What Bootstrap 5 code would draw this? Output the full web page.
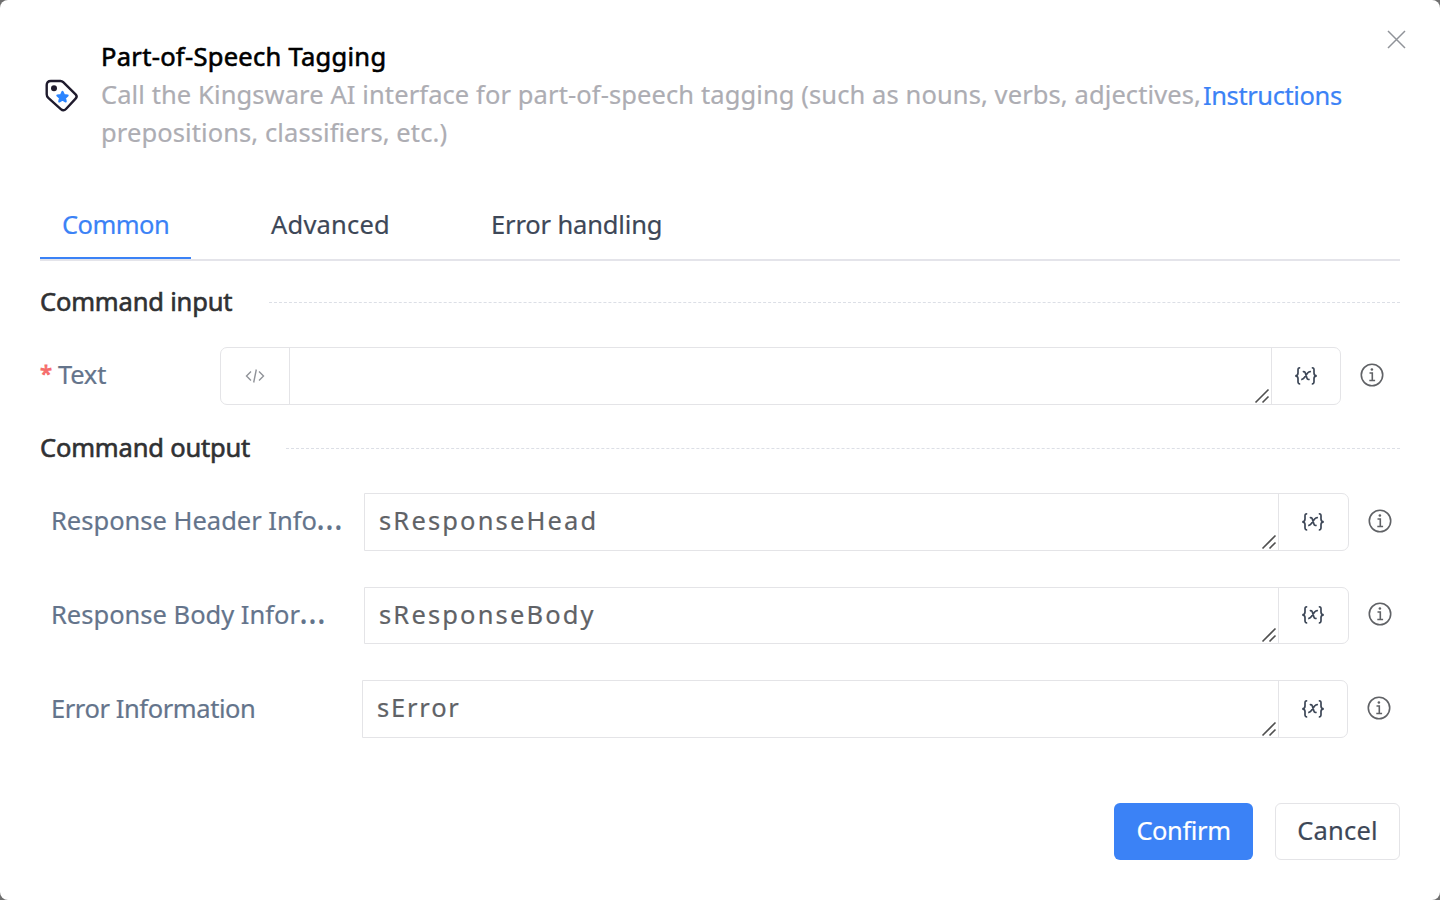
<!DOCTYPE html>
<html lang="en">
<head>
<meta charset="utf-8">
<meta name="viewport" content="width=device-width, initial-scale=1">
<title>Part-of-Speech Tagging</title>
<link href="https://cdn.jsdelivr.net/npm/bootstrap@5.3.0/dist/css/bootstrap.min.css" rel="stylesheet">
<style>
  html, body { height: 100%; }
  body { background: #6f6f6f; font-family: "Noto Sans", sans-serif; font-size: 25.5px; line-height: 38px; overflow: hidden; color: #3d4757; }
  .dialog { height: 900px; border-radius: 8px; background: #fff; padding: 37px 40px 40px; }
  .head { height: 163px; }
  .tag-icon { width: 43px; margin: 36px 18px 0 0; }
  .copy { width: 1102px; white-space: nowrap; }
  .title { color: #000; -webkit-text-stroke: .6px #000; font-size: 25.5px; line-height: 38px; letter-spacing: .29px; }
  .desc { color: #adadb3; -webkit-text-stroke: .2px; letter-spacing: .098px; }
  .doc { color: #3b82f6; text-decoration: none; margin-top: 39px; letter-spacing: -.4px; -webkit-text-stroke: .2px; }
  .shut { top: 29px; right: 33px; }
  .tabs { height: 61px; border-bottom: 2px solid #e4e4ea; -webkit-text-stroke: .2px; }
  .tabs .nav-link { height: 59px; padding: 5px 0 0 22px; color: #3d4757; border-radius: 0; }
  .tabs .nav-link.active { width: 151px; color: #3b82f6; border-bottom: 2px solid #3b82f6; letter-spacing: -.55px; }
  .tabs .t2 { width: 220px; padding-left: 0; margin-left: 80px; letter-spacing: .2px; }
  .tabs .t3 { padding-left: 0; letter-spacing: -.15px; }
  .section { height: 38px; color: #303133; -webkit-text-stroke: .6px #303133; letter-spacing: -.18px; }
  .section > span:first-child { margin-top: -2px; }
  .s-in { margin-top: 22px; }
  .s-in > span:first-child { width: 229px; }
  .s-out { margin-top: 24.8px; }
  .s-out > span:first-child { width: 246px; }
  .dash { flex: 1; border-top: 1px dashed #dcdfe6; }
  .field { height: 57.6px; }
  .first { margin-top: 26px; }
  .label { color: #64748b; white-space: nowrap; width: 313px; margin-top: -3px; -webkit-text-stroke: .2px; }
  .first .label { width: 180px; letter-spacing: -.2px; }
  .req { color: #f56c6c; width: 18px; font-size: 22px; -webkit-text-stroke: .8px #f56c6c; line-height: 34px; }
  .more { font-size: 34px; line-height: 0; -webkit-text-stroke: 0; margin-left: -1px; }
  .box { height: 57.6px; border: 1px solid #e4e4e7; width: 985px; }
  .first .box { width: 1121px; border-radius: 7px; }
  .box.end { border-radius: 0 7px 7px 0; }
  .slot { flex: none; }
  .slot.l { width: 69px; border-right: 1px solid #e4e4e7; }
  .slot.r { border-left: 1px solid #e4e4e7; width: 70px; padding-right: 1px; }
  .first .slot.r, .last .slot.r { width: 69px; padding-right: 0; }
  .last .label { width: 311px; letter-spacing: -.42px; }
  .last .box { width: 986px; }
  .box textarea { resize: none; border: 0; outline: 0; padding: 7px 14px 0; width: 100%; height: 100%; color: #606266; background: transparent; overflow: hidden; display: block; line-height: 38px; letter-spacing: 2.15px; -webkit-text-stroke: .2px; }
  .last textarea { letter-spacing: 1.8px; }
  .grip { right: 1px; bottom: 0; }
  .tip { margin: -2px 0 0 18.5px; flex: none; }
  .outs { gap: 36.07px; margin-top: 25.6px; padding-left: 11px; }
  .foot { margin-top: 65px; gap: 22px; }
  .action { height: 57px; border-radius: 6px; line-height: 38px; padding: 0 0 3px; white-space: nowrap; -webkit-text-stroke: .2px; }
  .ok { width: 139px; background: #3b82f6; color: #fff; border: 0; letter-spacing: -.4px; }
  .no { width: 125px; background: #fff; color: #3d4757; border: 1px solid #e4e4e7; letter-spacing: .2px; }
</style>
</head>
<body>
<svg class="d-none">
  <symbol id="var" viewBox="0 0 24 20"><g fill="none" stroke="#3d4757" stroke-width="1.700"><path d="M6.200 1.800Q4 1.600 4 3.800V7Q4 9.800 1.200 9.800Q4 9.800 4 12.600V15.800Q4 18 6.200 17.800M17.800 1.800Q20 1.600 20 3.800V7Q20 9.800 22.800 9.800Q20 9.800 20 12.600V15.800Q20 18 17.800 17.800"/><path d="M8.800 5.900Q10.600 5.200 11.300 7L12.900 11.900Q13.600 14 15.600 13.300M16.900 5.700Q15.200 5.200 13.600 7L10.400 11.600Q9 13.700 7.200 13.300"/></g></symbol>
  <symbol id="info" viewBox="0 0 24 24"><circle cx="12" cy="12" r="10.700" fill="none" stroke="#606266" stroke-width="1.600"/><path d="M9.500 10h2.800v7.300M9.300 17.500h5.800" fill="none" stroke="#606266" stroke-width="1.600"/><circle cx="11.900" cy="6.500" r="1.300" fill="#606266"/></symbol>
  <symbol id="grip" viewBox="0 0 16 16"><path d="M1.500 14.500l13-13M8.500 14.500l6-6" stroke="#505050" stroke-width="1.600"/></symbol>
</svg>
<main class="dialog position-relative">
  <header class="head d-flex align-items-start">
    <svg class="tag-icon" width="43" height="43" viewBox="0 0 43 43"><path d="M10.800 8H20.500Q22 8 23.200 9.200L35.600 21.400Q37.700 23.500 35.600 25.700L26 36Q23.500 38.600 20.800 36.200L8.300 24.800Q6.700 23.300 6.700 21.200V12Q6.700 8 10.800 8Z" fill="none" stroke="#1f1b2d" stroke-width="2.400"/><circle cx="14" cy="15.200" r="3" fill="#1f1b2d"/><path d="M22.500 18.800l1.500 3.100 3.700.5-2.700 2.500.8 3.600-3.300-1.800-3.300 1.800.8-3.600-2.700-2.500 3.700-.5Z" fill="#2b85ff" stroke="#2b85ff" stroke-width="2" stroke-linejoin="round"/></svg>
    <div class="copy">
      <h1 class="title mb-0 fw-normal">Part-of-Speech Tagging</h1>
      <div class="desc">Call the Kingsware AI interface for part-of-speech tagging (such as nouns, verbs, adjectives,<br>prepositions, classifiers, etc.)</div>
    </div>
    <a class="doc" href="#">Instructions</a>
    <svg class="shut position-absolute" width="21" height="21" viewBox="0 0 21 21"><path d="M2 2l17 17M19 2L2 19" stroke="#909399" stroke-width="1.500"/></svg>
  </header>
  <nav class="tabs nav flex-nowrap">
    <a class="nav-link active" href="#">Common</a>
    <a class="nav-link t2" href="#">Advanced</a>
    <a class="nav-link t3" href="#">Error handling</a>
  </nav>
  <div class="section s-in d-flex align-items-center"><span>Command input</span><span class="dash"></span></div>
  <div class="field first d-flex align-items-center">
    <div class="label d-flex"><span class="req">*</span><span>Text</span></div>
    <div class="box d-flex">
      <div class="slot l d-flex align-items-center justify-content-center"><svg width="20" height="16" viewBox="0 0 20 16"><path d="M6 3.500L1.500 8 6 12.500M14 3.500L18.500 8 14 12.500M11.300 1.500L8.700 14.500" fill="none" stroke="#909399" stroke-width="1.400"/></svg></div>
      <div class="flex-grow-1 position-relative"><textarea></textarea><svg class="grip position-absolute" width="16" height="16"><use href="#grip"/></svg></div>
      <div class="slot r d-flex align-items-center justify-content-center"><svg width="24" height="20"><use href="#var"/></svg></div>
    </div>
    <svg class="tip" width="24" height="24"><use href="#info"/></svg>
  </div>
  <div class="section s-out d-flex align-items-center"><span>Command output</span><span class="dash"></span></div>
  <div class="outs d-flex flex-column">
    <div class="field d-flex align-items-center">
      <div class="label">Response Header Info<span class="more">…</span></div>
      <div class="box end d-flex">
        <div class="flex-grow-1 position-relative"><textarea>sResponseHead</textarea><svg class="grip position-absolute" width="16" height="16"><use href="#grip"/></svg></div>
        <div class="slot r d-flex align-items-center justify-content-center"><svg width="24" height="20"><use href="#var"/></svg></div>
      </div>
      <svg class="tip" width="24" height="24"><use href="#info"/></svg>
    </div>
    <div class="field d-flex align-items-center">
      <div class="label">Response Body Infor<span class="more">…</span></div>
      <div class="box end d-flex">
        <div class="flex-grow-1 position-relative"><textarea>sResponseBody</textarea><svg class="grip position-absolute" width="16" height="16"><use href="#grip"/></svg></div>
        <div class="slot r d-flex align-items-center justify-content-center"><svg width="24" height="20"><use href="#var"/></svg></div>
      </div>
      <svg class="tip" width="24" height="24"><use href="#info"/></svg>
    </div>
    <div class="field last d-flex align-items-center">
      <div class="label">Error Information</div>
      <div class="box end d-flex">
        <div class="flex-grow-1 position-relative"><textarea>sError</textarea><svg class="grip position-absolute" width="16" height="16"><use href="#grip"/></svg></div>
        <div class="slot r d-flex align-items-center justify-content-center"><svg width="24" height="20"><use href="#var"/></svg></div>
      </div>
      <svg class="tip" width="24" height="24"><use href="#info"/></svg>
    </div>
  </div>
  <footer class="foot d-flex justify-content-end">
    <button class="action ok" type="button">Confirm</button>
    <button class="action no" type="button">Cancel</button>
  </footer>
</main>
<script src="https://cdn.jsdelivr.net/npm/bootstrap@5.3.0/dist/js/bootstrap.bundle.min.js"></script>
</body>
</html>
